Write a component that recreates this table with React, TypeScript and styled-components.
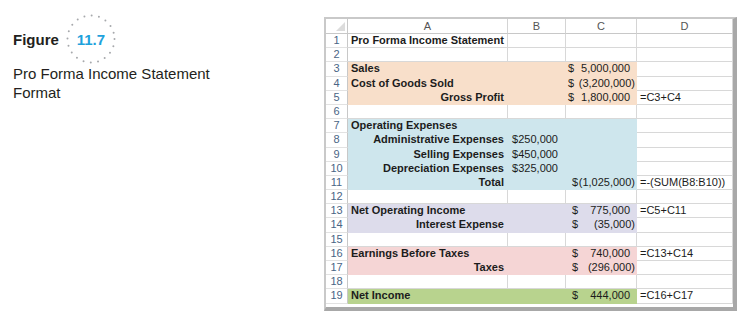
import React from "react";
import styled, { createGlobalStyle } from "styled-components";

const Global = createGlobalStyle`
  html, body { margin: 0; padding: 0; background: #ffffff; }
  body { font-family: "Liberation Sans", Arial, sans-serif; }
`;

const Page = styled.div`
  display: flex;
  align-items: flex-start;
  width: 752px;
  height: 318px;
  overflow: hidden;
`;

const Caption = styled.div`
  box-sizing: border-box;
  width: 324px;
  padding: 14px 0 0 13px;
  display: flex;
  flex-direction: column;
  color: #231f20;
`;

const FigureRow = styled.div`
  display: flex;
  align-items: center;
  height: 50px;
  gap: 7px;
`;

const FigureWord = styled.span`
  font-size: 15px;
  font-weight: bold;
`;

const Badge = styled.span`
  position: relative;
  width: 50px;
  height: 50px;
  display: flex;
  align-items: center;
  justify-content: center;
  font-size: 15px;
  font-weight: bold;
  color: #1ea2dc;
`;

const Dots = styled.svg`
  position: absolute;
  inset: 0;
`;

const Title = styled.div`
  font-size: 15px;
  line-height: 19px;
  width: 210px;
`;

const Frame = styled.div`
  margin-top: 17px;
  border-top: 2px solid #c9c9c9;
  border-left: 2px solid #c9c9c9;
  border-right: 4px solid #a8a8a8;
  border-bottom: 4px solid #a8a8a8;
  padding-bottom: 3px;
  background: #ffffff;
`;

const Grid = styled.div`
  display: grid;
  grid-template-columns: 22px 160px 58px 71px 96px;
  grid-template-rows: 15px repeat(19, 14.2px);
  font-size: 11px;
`;

const Corner = styled.div`
  position: relative;
  box-sizing: border-box;
  border-right: 1px solid #c8c8c8;
  border-bottom: 1px solid #c8c8c8;
  background: #ffffff;
  &::after {
    content: "";
    position: absolute;
    right: 2px;
    bottom: 2px;
    width: 0;
    height: 0;
    border-left: 9px solid transparent;
    border-bottom: 9px solid #dcdcdc;
  }
`;

const ColHead = styled.div`
  box-sizing: border-box;
  border-right: 1px solid #d4d4d4;
  border-bottom: 1px solid #c8c8c8;
  background: #ffffff;
  color: #555;
  text-align: center;
  line-height: 14px;
`;

const RowHead = styled.div`
  box-sizing: border-box;
  border-right: 1px solid #c8c8c8;
  border-bottom: 1px solid #e2e2e2;
  background: #ffffff;
  color: #4a6585;
  text-align: center;
  line-height: 13px;
`;

const fills: Record<string, string> = {
  none: "#ffffff",
  peach: "#f8dfca",
  blue: "#cee6ed",
  lavender: "#dddceb",
  pink: "#f5d5d5",
  green: "#b8d38e",
};

type CellProps = {
  $fill: string;
  $bold?: boolean;
  $align?: "left" | "right";
  $pad?: number;
};

const Cell = styled.div<CellProps>`
  box-sizing: border-box;
  background: ${(p) => fills[p.$fill]};
  border-right: 1px solid ${(p) => (p.$fill === "none" ? "#d8d8d8" : fills[p.$fill])};
  border-bottom: 1px solid ${(p) => (p.$fill === "none" ? "#d8d8d8" : fills[p.$fill])};
  font-weight: ${(p) => (p.$bold ? "bold" : "normal")};
  text-align: ${(p) => p.$align ?? "left"};
  padding: 0 ${(p) => p.$pad ?? 3}px 0 3px;
  line-height: 13px;
  color: #1c1c1c;
  white-space: nowrap;
  overflow: visible;
`;

const Money = styled(Cell)<{ $lead: number }>`
  display: flex;
  justify-content: space-between;
  padding: 0 1px 0 ${(p) => p.$lead}px;
`;

const Amount = styled.span<{ $paren: boolean }>`
  padding-right: ${(p) => (p.$paren ? 0 : 5)}px;
`;

type Row = {
  fill: string;
  a?: string;
  aRight?: boolean;
  b?: string;
  c?: string;
  lead?: number;
  d?: string;
};

const rows: Row[] = [
  { fill: "none", a: "Pro Forma Income Statement" },
  { fill: "none" },
  { fill: "peach", a: "Sales", c: "5,000,000", lead: 2 },
  { fill: "peach", a: "Cost of Goods Sold", c: "(3,200,000)", lead: 2 },
  { fill: "peach", a: "Gross Profit", aRight: true, c: "1,800,000", lead: 2, d: "=C3+C4" },
  { fill: "none" },
  { fill: "blue", a: "Operating Expenses" },
  { fill: "blue", a: "Administrative Expenses", aRight: true, b: "$250,000" },
  { fill: "blue", a: "Selling Expenses", aRight: true, b: "$450,000" },
  { fill: "blue", a: "Depreciation Expenses", aRight: true, b: "$325,000" },
  { fill: "blue", a: "Total", aRight: true, c: "(1,025,000)", lead: 6, d: "=-(SUM(B8:B10))" },
  { fill: "none" },
  { fill: "lavender", a: "Net Operating Income", c: "775,000", lead: 6, d: "=C5+C11" },
  { fill: "lavender", a: "Interest Expense", aRight: true, c: "(35,000)", lead: 6 },
  { fill: "none" },
  { fill: "pink", a: "Earnings Before Taxes", c: "740,000", lead: 6, d: "=C13+C14" },
  { fill: "pink", a: "Taxes", aRight: true, c: "(296,000)", lead: 6 },
  { fill: "none" },
  { fill: "green", a: "Net Income", c: "444,000", lead: 6, d: "=C16+C17" },
];

export default function App() {
  return (
    <>
      <Global />
      <Page>
        <Caption>
          <FigureRow>
            <FigureWord>Figure</FigureWord>
            <Badge>
              <Dots width="50" height="50" viewBox="0 0 50 50">
                <circle
                  cx="25"
                  cy="25"
                  r="23.5"
                  fill="none"
                  stroke="#a7a9ac"
                  strokeWidth="2"
                  strokeLinecap="round"
                  strokeDasharray="0 7.38"
                />
              </Dots>
              11.7
            </Badge>
          </FigureRow>
          <Title>Pro Forma Income Statement Format</Title>
        </Caption>
        <Frame>
          <Grid>
            <Corner />
            {["A", "B", "C", "D"].map((l) => (
              <ColHead key={l}>{l}</ColHead>
            ))}
            {rows.map((r, i) => (
              <React.Fragment key={i}>
                <RowHead>{i + 1}</RowHead>
                <Cell $fill={r.fill} $bold $align={r.aRight ? "right" : "left"}>
                  {r.a}
                </Cell>
                <Cell $fill={r.fill} $align="right" $pad={7}>
                  {r.b}
                </Cell>
                {r.c ? (
                  <Money $fill={r.fill} $lead={r.lead ?? 2}>
                    <span>$</span>
                    <Amount $paren={r.c.startsWith("(")}>{r.c}</Amount>
                  </Money>
                ) : (
                  <Cell $fill={r.fill} />
                )}
                <Cell $fill="none">{r.d}</Cell>
              </React.Fragment>
            ))}
          </Grid>
        </Frame>
      </Page>
    </>
  );
}
